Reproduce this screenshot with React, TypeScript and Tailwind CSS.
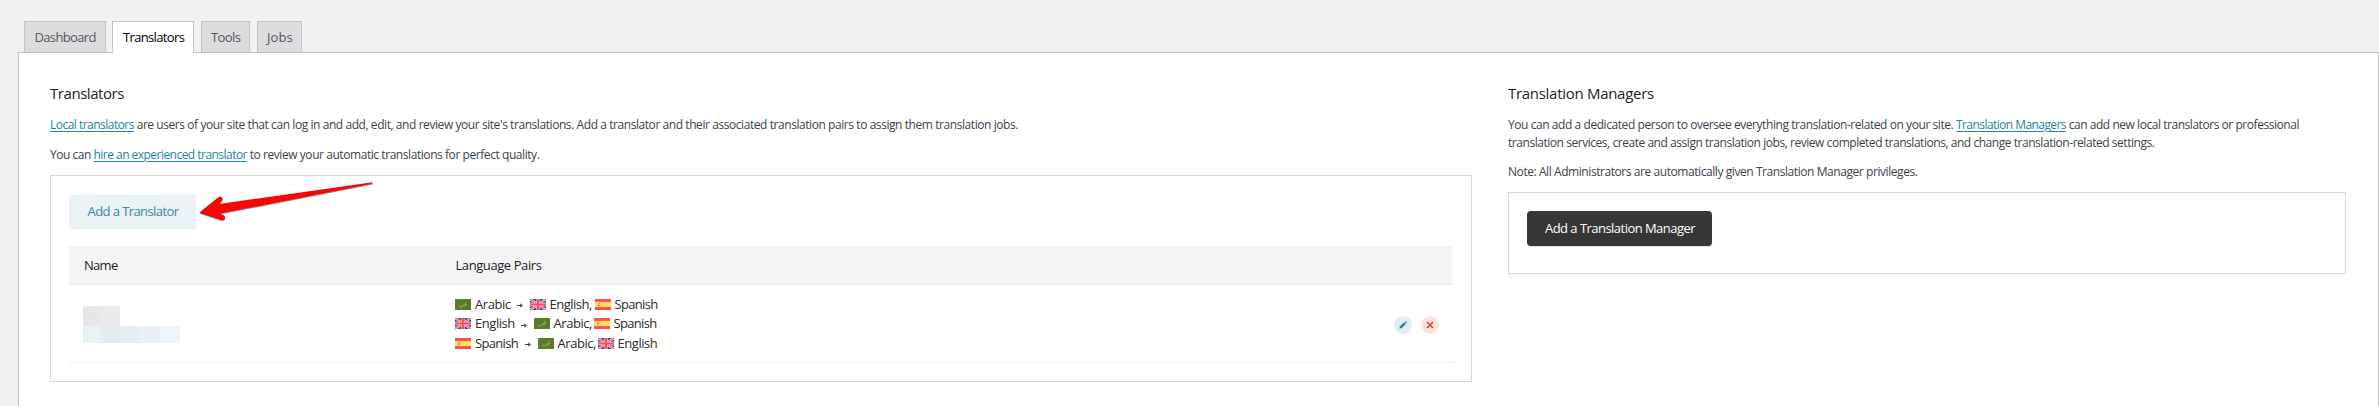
import type { ReactNode } from "react";

type Lang = "Arabic" | "English" | "Spanish";

function Flag({ lang }: { lang: Lang }) {
  if (lang === "Arabic") {
    return (
      <svg className="h-[11px] w-[16px] shrink-0" viewBox="0 0 16 11">
        <rect width="16" height="11" fill="#5b7c26" />
        <path d="M4 6.800c0 1.600 3 1.500 4.200.2.500-.6.300-1.200 1.300-1.700 1.200-.6 2.200-.2 2 .5-.3.700-1.600.8-3 .7" fill="none" stroke="#b3c394" strokeWidth=".7" />
        <circle cx="10.800" cy="3.400" r=".5" fill="#b4c398" />
      </svg>
    );
  }
  if (lang === "Spanish") {
    return (
      <svg className="h-[11px] w-[16px] shrink-0" viewBox="0 0 16 11">
        <rect width="16" height="11" fill="#ff4b55" />
        <rect y="2.900" width="16" height="5.200" fill="#ffe05c" />
        <rect x="3" y="4" width="2" height="2.800" fill="#f0804a" />
        <rect x="3.700" y="4.700" width="1" height="1.100" fill="#ffd0a0" />
      </svg>
    );
  }
  return (
    <svg className="h-[11px] w-[16px] shrink-0" viewBox="0 0 16 11" preserveAspectRatio="none">
      <rect width="16" height="11" fill="#1556ad" />
      <path d="M0 0 16 11M16 0 0 11" stroke="#f3c9d4" strokeWidth="2.400" />
      <path d="M0 0 16 11M16 0 0 11" stroke="#ff4b55" strokeWidth="1" />
      <path d="M8 0v11M0 5.500h16" stroke="#f8c9d2" strokeWidth="3.400" />
      <path d="M8 0v11M0 5.500h16" stroke="#ff4b55" strokeWidth="2.200" />
    </svg>
  );
}

const labelClass: Record<string, string> = {
  Arabic: "w-[35px] tracking-[-0.45px]",
  "Arabic,": "w-[36.5px] tracking-[-0.45px]",
  English: "w-[39px] tracking-[-0.45px]",
  "English,": "w-[41.5px] tracking-[-0.5px]",
  Spanish: "w-[43px] tracking-[-0.68px]",
};

function Language({ lang, comma }: { lang: Lang; comma?: boolean }) {
  const label = comma ? `${lang},` : lang;
  return (
    <span className="flex items-center gap-[4px]">
      <Flag lang={lang} />
      <span className={`whitespace-nowrap ${labelClass[label]}`}>{label}</span>
    </span>
  );
}

function PairRow({ from, to }: { from: Lang; to: [Lang, Lang] }) {
  return (
    <div className="flex h-[19.5px] items-center text-[13px] text-[#2b2b2b]">
      <Language lang={from} />
      <svg className="mt-[3px] mr-[7px] ml-[6.5px] h-[5px] w-[6px]" viewBox="0 0 6 5">
        <path d="M0 2.500h5" stroke="#444" strokeWidth="1" />
        <path d="M3.300.3 5.900 2.500 3.300 4.700Z" fill="#444" />
      </svg>
      <Language lang={to[0]} comma />
      <span className="w-[3.5px]" />
      <Language lang={to[1]} />
    </div>
  );
}

function Tab({ className, active, children }: { className: string; active?: boolean; children: ReactNode }) {
  return (
    <button
      className={`box-border flex shrink-0 items-center justify-start border border-b-0 border-[#c3c4c7] text-[13px] leading-[20px] font-medium whitespace-nowrap ${
        active ? "relative z-10 h-[32px] bg-white pb-px text-black" : "h-[31px] bg-[#dcdcde] text-[#50575e]"
      } ${className}`}
    >
      {children}
    </button>
  );
}

function Link({ className, children }: { className?: string; children: ReactNode }) {
  return (
    <a className={`text-[#2681a9] underline decoration-1 underline-offset-2 ${className ?? ""}`} href="#">
      {children}
    </a>
  );
}

const redacted = [
  ["h-[20px] w-[17px] bg-[#e7e7e7]", "h-[20px] w-[20px] bg-[#e9e9eb]"],
  [
    "h-[17px] w-[17px] bg-[#eaf1f5]",
    "h-[17px] w-[20px] bg-[#e2ecef]",
    "h-[17px] w-[20px] bg-[#e4edf0]",
    "h-[17px] w-[20px] bg-[#e9eff3]",
    "h-[17px] w-[20px] bg-[#eef5f9]",
  ],
];

function Translators() {
  return (
    <section className="w-[1422px]">
      <h2 className="h-[20px] text-[15px] leading-[20px] font-medium tracking-[-0.45px] whitespace-nowrap text-[#1d2327]">Translators</h2>
      <p className="mt-[13px] h-[18px] text-[12px] leading-[18px] whitespace-nowrap text-[#3c434a]">
        <Link className="tracking-[-0.52px]">Local translators</Link>
        <span className="tracking-[-0.431px]">
          {" "}are users of your site that can log in and add, edit, and review your site's translations. Add a translator and their
          associated translation pairs to assign them translation jobs.
        </span>
      </p>
      <p className="mt-[12px] h-[18px] text-[12px] leading-[18px] whitespace-nowrap text-[#3c434a]">
        <span className="tracking-[-0.475px]">You can </span>
        <Link className="tracking-[-0.53px]">hire an experienced translator</Link>
        <span className="tracking-[-0.435px]"> to review your automatic translations for perfect quality.</span>
      </p>
      <div className="relative mt-[11px] h-[207px] border border-[#d5d7d7] px-[18px] pt-[18px]">
        <button className="block h-[35px] w-[127px] rounded-[4px] bg-[#eaf2f5] pl-[18.5px] text-left text-[13px] tracking-[-0.578px] whitespace-nowrap text-[#3f869f] shadow-[0_1px_1px_rgba(0,0,0,0.06)]">
          Add a Translator
        </button>
        <div className="mt-[17px] flex h-[39px] items-center rounded-t-[2px] border-b border-[#ececec] bg-[#f4f4f4] pt-[2px] pl-[15px] text-[13px] font-medium text-[#1d2327]">
          <span className="w-[371.5px] tracking-[-0.7px]">Name</span>
          <span className="tracking-[-0.42px]">Language Pairs</span>
        </div>
        <div className="flex h-[78px] border-b border-[#eeeeee]">
          <div className="w-[386px] pt-[21px] pl-[14px]">
            {redacted.map((row, i) => (
              <div key={i} className="flex">
                {row.map((cell) => (
                  <span key={cell} className={cell} />
                ))}
              </div>
            ))}
          </div>
          <div className="flex-1 pt-[9.5px]">
            <PairRow from="Arabic" to={["English", "Spanish"]} />
            <PairRow from="English" to={["Arabic", "Spanish"]} />
            <PairRow from="Spanish" to={["Arabic", "English"]} />
          </div>
          <div className="flex gap-[9px] pt-[31px] pr-[14px]">
            <button className="flex size-[18px] items-center justify-center rounded-full bg-[#e1edf1]">
              <svg className="mr-px size-[8px]" viewBox="0 0 8 8">
                <path d="M.3 7.700 1 5.200 4.800 1.500 6.600 3.300 2.800 7Z" fill="#287e9c" />
                <path d="M5.300 1 6.100.3q.4-.3.8 0l.8.800q.3.400 0 .8L7 2.700Z" fill="#5099b1" />
              </svg>
            </button>
            <button className="flex size-[18px] items-center justify-center rounded-full bg-[#f8e3dd]">
              <svg className="mr-px size-[8px]" viewBox="0 0 8 8">
                <path d="M1 1 7 7M7 1 1 7" stroke="#d04a26" strokeWidth="1.700" />
              </svg>
            </button>
          </div>
        </div>
        <svg className="absolute top-[3px] left-[147px] h-[44px] w-[180px] overflow-visible drop-shadow-[0_1px_0.5px_rgba(0,0,0,0.5)]" viewBox="198 179 180 44">
          <path
            d="M200.300 211.800 218.300 197.300Q220.500 195.600 222 197.500 223.200 199.200 221.600 201L219 203.900 372.500 182.200V183.600L219.500 213.600 223.600 215.300Q225.800 216.400 224.900 218.600 223.900 220.600 221.500 219.900L200.500 213Q199.600 212.500 200.300 211.800Z"
            fill="#fb0404"
          />
        </svg>
      </div>
    </section>
  );
}

function Managers() {
  return (
    <section className="w-[838px]">
      <h2 className="h-[20px] text-[15px] leading-[20px] font-medium tracking-[-0.29px] whitespace-nowrap text-[#1d2327]">Translation Managers</h2>
      <p className="mt-[13px] h-[36px] text-[12px] leading-[18px] whitespace-nowrap text-[#3c434a]">
        <span className="tracking-[-0.433px]">You can add a dedicated person to oversee everything translation-related on your site. </span>
        <Link className="tracking-[-0.566px]">Translation Managers</Link>
        <span className="tracking-[-0.454px]"> can add new local translators or professional</span>
        <br />
        <span className="tracking-[-0.456px]">
          translation services, create and assign translation jobs, review completed translations, and change translation-related
          settings.
        </span>
      </p>
      <p className="mt-[11px] h-[18px] text-[12px] leading-[18px] tracking-[-0.43px] whitespace-nowrap text-[#3c434a]">
        Note: All Administrators are automatically given Translation Manager privileges.
      </p>
      <div className="mt-[11px] h-[82px] border border-[#d5d7d7] pt-[18px] pl-[18px]">
        <button className="block h-[35px] w-[185px] rounded-[4px] bg-[#373737] pl-[18px] text-left text-[13px] tracking-[-0.534px] whitespace-nowrap text-white shadow-[0_1px_1px_rgba(0,0,0,0.12)]">
          Add a Translation Manager
        </button>
      </div>
    </section>
  );
}

export default function App() {
  return (
    <div className="h-[406px] w-full overflow-hidden bg-[#f0f0f1] pt-[21px] pl-[18px] font-['Open_Sans','Noto_Sans',sans-serif]">
      <nav className="flex h-[31px] pl-[6px]">
        <Tab className="mr-[6px] w-[82px] pl-[9.5px] tracking-[-0.65px]">Dashboard</Tab>
        <Tab active className="mr-[7px] w-[82px] pl-[10px] tracking-[-0.65px]">Translators</Tab>
        <Tab className="mr-[7px] w-[49px] pl-[9px] tracking-[-0.6px]">Tools</Tab>
        <Tab className="w-[45px] pl-[9px] tracking-[0.1px]">Jobs</Tab>
      </nav>
      <main className="flex h-[360px] items-start gap-[36px] border border-[#c3c4c7] bg-white pt-[30px] pl-[31px]">
        <Translators />
        <Managers />
      </main>
    </div>
  );
}
